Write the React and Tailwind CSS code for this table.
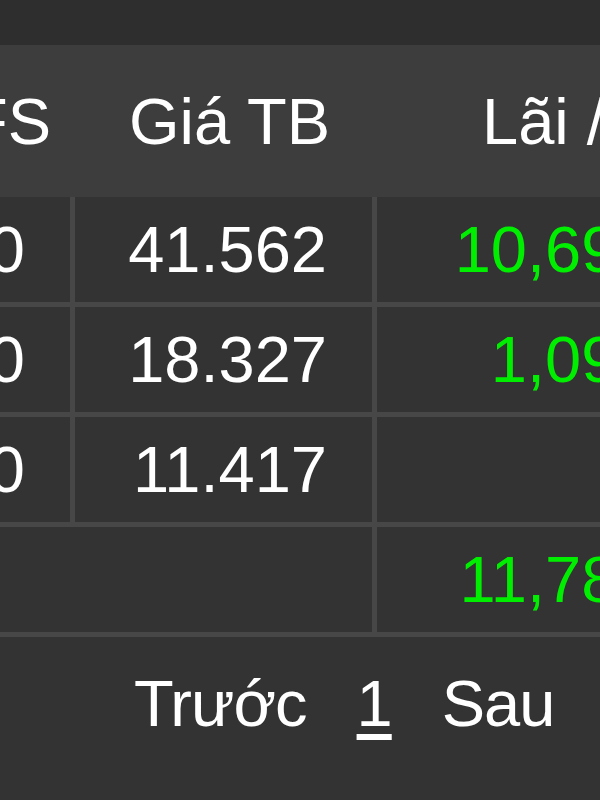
const rows = [
  { qty: "1,000", avg: "41.562", pnl: "10,692,400" },
  { qty: "500", avg: "18.327", pnl: "1,093,500" },
  { qty: "200", avg: "11.417", pnl: "" },
];

export default function App() {
  return (
    <div className="w-[600px] h-[800px] overflow-hidden bg-[#333333] text-white text-[65px] leading-none font-['Liberation_Sans',Arial,sans-serif]">
      <div className="w-[1000px] -ml-[200px]">
        {/* top strip */}
        <div className="h-[45px] bg-[#2e2e2e]" />

        {/* header */}
        <div className="h-[152px] bg-[#3d3d3d] flex items-center">
          <div className="w-[275px] pr-[24px] text-right whitespace-nowrap">KL FS</div>
          <div className="w-[302px] pr-[47px] text-right whitespace-nowrap">Giá TB</div>
          <div className="flex-1 pl-[105px] whitespace-nowrap">Lãi / Lỗ</div>
        </div>

        {/* rows */}
        {rows.map((r, i) => (
          <div key={i} className="h-[110px] flex border-b-[5px] border-[#474747]">
            <div className="w-[275px] pr-[45px] border-r-[5px] border-[#474747] flex items-center justify-end">
              {r.qty}
            </div>
            <div className="w-[302px] pr-[45px] border-r-[5px] border-[#474747] flex items-center justify-end">
              {r.avg}
            </div>
            <div className="flex-1 pr-[20px] flex items-center justify-end text-[#00ee00]">
              {r.pnl}
            </div>
          </div>
        ))}

        {/* total */}
        <div className="h-[110px] flex border-b-[5px] border-[#474747]">
          <div className="w-[577px] border-r-[5px] border-[#474747]" />
          <div className="flex-1 pr-[20px] flex items-center justify-end text-[#00ee00]">
            11,785,900
          </div>
        </div>

        {/* pager */}
        <div className="h-[163px] pt-[34px] pl-[334px] flex gap-[50px] whitespace-nowrap tracking-[-1px]">
          <span>Trước</span>
          <span className="underline underline-offset-[8px]">1</span>
          <span>Sau</span>
        </div>
      </div>
    </div>
  );
}
